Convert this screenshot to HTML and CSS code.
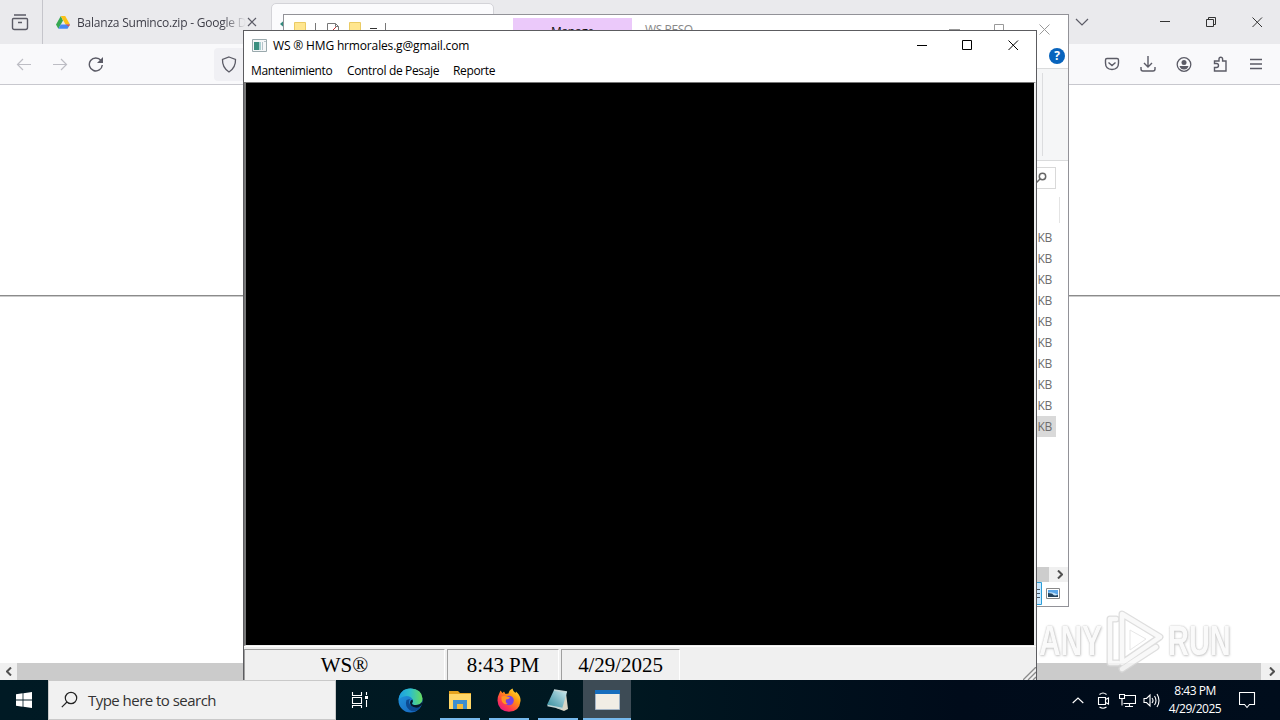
FILE: index.html
```html
<!DOCTYPE html>
<html lang="en">
<head>
<meta charset="utf-8">
<title>Desktop</title>
<link rel="stylesheet" href="styles.css">
</head>
<body>
<div class="desktop">
  <section class="browser">
    <div class="tabstrip">
      <div class="recent"><svg width="18" height="18" viewBox="0 0 18 18" class="line"><path stroke-width="1.400" d="M3 2h12M2.500 5.500h13q1 0 1 1v8q0 2-2 2h-11q-2 0-2-2v-8q0-1 1-1zM7 9.500h4"/></svg></div>
      <div class="tab">
        <svg width="14" height="13" viewBox="0 0 14 13"><path fill="#36a852" d="M4.8 0 0 8.4 2.4 12.7 7 4.4z"/><path fill="#fbc116" d="M4.8 0h4.4L14 8.4H9.5z"/><path fill="#4688f4" d="M4.7 8.4H14l-2.4 4.3H2.4z"/><path fill="#ea4f43" d="M9.5 8.4H14l-1.200 2.200z"/></svg>
        <span class="tab-title">Balanza Suminco.zip - Google D</span>
        <svg width="10" height="10" viewBox="0 0 10 10" class="line"><path d="m1 1 8 8m0-8-8 8"/></svg>
      </div>
      <div class="active-tab"><i></i></div>
      <div class="tab-menu"><svg width="14" height="8" viewBox="0 0 14 8" class="line"><path d="m1 1 6 6 6-6"/></svg></div>
      <div class="controls">
        <span><svg width="11" height="11" viewBox="0 0 11 11" class="line dark"><path d="M0 4.500h10"/></svg></span>
        <span><svg width="11" height="11" viewBox="0 0 11 11" class="line dark"><path d="M.5 2.500h7v7h-7zM2.500 2.500v-2h7v7h-2"/></svg></span>
        <span><svg width="11" height="11" viewBox="0 0 11 11" class="line dark"><path d="m.5.5 9.500 9.500m0-9.500L.5 10"/></svg></span>
      </div>
    </div>
    <div class="toolbar">
      <div class="nav">
        <span><svg width="16" height="16" viewBox="0 0 16 16" class="line faint"><path d="M15 8.5H2M7 3 1.5 8.5 7 14"/></svg></span>
        <span><svg width="16" height="16" viewBox="0 0 16 16" class="line faint"><path d="M1 8.500H14M9 3l5.500 5.500L9 14"/></svg></span>
        <span><svg width="16" height="16" viewBox="0 0 16 16" class="line"><path stroke-width="1.400" d="M14.300 9A6.500 6.500 0 1 1 13 4.500"/><path fill="#5b5b66" stroke="none" d="M15 1v6H9z"/></svg></span>
      </div>
      <div class="urlbar"><svg width="16" height="17" viewBox="0 0 16 17" class="line"><path stroke-width="1.300" d="M8 1 14.500 3.500q.4 8-6.500 12.500Q1.100 11.500 1.500 3.500z"/></svg></div>
      <div class="actions">
        <span><svg width="16" height="16" viewBox="0 0 16 16" class="line"><path stroke-width="1.400" d="M3 2.500h10q1.500 0 1.500 1.500v3q0 6.500-6.500 6.500T1.500 7V4Q1.500 2.500 3 2.500zM4.500 6.500 8 9.500l3.500-3"/></svg></span>
        <span><svg width="16" height="16" viewBox="0 0 16 16" class="line"><path stroke-width="1.400" d="M8 0v11M4 7l4 4 4-4M1 11v2q0 2 2 2h10q2 0 2-2v-2"/></svg></span>
        <span><svg width="16" height="16" viewBox="0 0 16 16" class="line"><circle cx="8" cy="8.500" r="6.800" stroke-width="1.300"/><circle cx="8" cy="6.500" r="2.500" fill="#5b5b66" stroke="none"/><path fill="#5b5b66" stroke="none" d="M3.500 10h9q-1 3.500-4.500 3.500T3.500 10z"/></svg></span>
        <span><svg width="16" height="16" viewBox="0 0 16 16" class="line"><path stroke-width="1.400" d="M2.500 15V11.500h2a2 2 0 0 0 0-4h-2V5h4.500V3a1.800 1.800 0 0 1 3.600 0V5h3.400v10z"/></svg></span>
        <span><svg width="14" height="14" viewBox="0 0 14 14" class="line"><path stroke-width="1.300" d="M1 2.500h12M1 7h12M1 11.500h12"/></svg></span>
      </div>
    </div>
    <div class="page"><hr class="rule"></div>
    <div class="hscroll">
      <span><svg width="6" height="9" viewBox="0 0 6 9"><path class="arrow" d="M5 .5 1 4.500l4 4"/></svg></span>
      <i></i>
      <span class="end"><svg width="6" height="9" viewBox="0 0 6 9"><path class="arrow" d="m1 .5 4 4-4 4"/></svg></span>
    </div>
  </section>

  <section class="explorer">
    <div class="ex-title">
      <svg class="ex-quick" width="110" height="16" viewBox="0 0 110 16"><path fill="#ffe68f" stroke="#eacb64" d="M10.500 7.500h11v9h-11zM65.500 7.500h11v9h-11z"/><path fill="none" stroke="#777" d="M31.500 8v8M43.500 16V8.500h8l3 3V16M51.500 8.500v3h3M101.500 8v8"/><path stroke="#c33" d="m49 15 3-3"/><path stroke="#333" d="M86 13.500h7"/></svg>
      <div class="ex-manage">Manage</div>
      <div class="ex-name">WS PESO</div>
      <div class="ex-controls">
        <svg width="11" height="11" viewBox="0 0 11 11"><path d="M0 5.500h11"/></svg>
        <svg width="11" height="11" viewBox="0 0 11 11"><path d="M.5.5h9v10h-9z"/></svg>
        <svg width="11" height="11" viewBox="0 0 11 11"><path d="m.5.500 10 10m0-10-10 10"/></svg>
      </div>
    </div>
    <div class="ex-help"><b>?</b></div>
    <div class="ex-ribbon"><i></i></div>
    <div class="ex-address"><div class="ex-search"><svg width="12" height="12" viewBox="0 0 12 12"><circle cx="7.500" cy="4.500" r="3.200"/><path d="M5 7 .5 11.500"/></svg></div></div>
    <div class="ex-head"></div>
    <ul class="ex-files"><li>KB</li><li>KB</li><li>KB</li><li>KB</li><li>KB</li><li>KB</li><li>KB</li><li>KB</li><li>KB</li><li class="selected">KB</li></ul>
    <div class="ex-scroll"><i></i><span><svg width="6" height="9" viewBox="0 0 6 9"><path class="arrow" d="m1 .5 4 4-4 4"/></svg></span></div>
    <div class="ex-status">
      <svg class="details" width="12" height="23" viewBox="0 0 12 23"><path fill="#cce8ff" stroke="#2a9fd8" d="M.5.5h11v22H.5z"/><path stroke="#456" d="M4 7.500h6M4 11.500h6M4 15.500h6"/></svg>
      <svg width="14" height="11" viewBox="0 0 14 11"><path fill="#fff" stroke="#888" d="M.5.500h13v10H.5z"/><path fill="#5aa5e8" d="M2 2h10v7H2z"/><path fill="#c5e3f8" d="M2 5q4-2 10 2v1H2z"/><path fill="#24435e" d="M2 5q4 0 5 1.500t5 .5v2H2z"/></svg>
    </div>
  </section>

  <section class="app">
    <div class="app-title">
      <svg width="15" height="13" viewBox="0 0 15 13"><path fill="#f5f7f8" stroke="#9aa9ad" d="M.5.500h14v12H.5z"/><path fill="#3b8f80" d="M2 3h5v8H2z"/><path fill="#a8cfd0" d="M7 3h2v8H7z"/><path stroke="#b6c4cb" d="M10.500 3v8M12 2.500h2"/></svg>
      <span class="app-name">WS ® HMG hrmorales.g@gmail.com</span>
      <div class="app-controls">
        <span><svg width="11" height="11" viewBox="0 0 11 11"><path d="M1 5.500h10"/></svg></span>
        <span><svg width="11" height="11" viewBox="0 0 11 11"><path d="M.5.5h9v9h-9z"/></svg></span>
        <span><svg width="11" height="11" viewBox="0 0 11 11"><path d="m.5.500 9.500 9.500m0-9.500L.5 10"/></svg></span>
      </div>
    </div>
    <nav class="menu"><span class="m1">Mantenimiento</span><span class="m2">Control de Pesaje</span><span class="m3">Reporte</span></nav>
    <div class="client"></div>
    <div class="status">
      <div class="pane p1">WS®</div><div class="pane p2">8:43 PM</div><div class="pane p3">4/29/2025</div>
      <svg class="grip" width="13" height="13" viewBox="0 0 13 13"><path stroke="#8a8a8a" stroke-width="1.300" d="M0 13 13 0M5 13l8-8M10 13l3-3"/></svg>
    </div>
  </section>

  <div class="watermark">
    <span class="any">ANY</span>
    <svg width="60" height="64" viewBox="0 0 60 64"><g fill="none" stroke-linejoin="round" stroke-linecap="round"><path stroke="#d9d9d9" stroke-width="7" d="M16 5 54 28 16 54zM10 10H4v44h8M16 60l34-22"/><path stroke="#f8f8f8" stroke-width="4.500" d="M16 5 54 28 16 54zM10 10H4v44h8M16 60l34-22"/></g><path fill="#fff" stroke="#e2e2e2" d="m24 21 16 9-16 11z"/></svg>
    <span class="run">RUN</span>
  </div>

  <footer class="taskbar">
    <div class="start"><svg width="16" height="16" viewBox="0 0 16 16"><path fill="#fff" d="m0 2.200 6.600-.9v6.300H0zM7.400 1.200 16 0v7.600H7.400zM0 8.400h6.600v6.300L0 13.800zM7.400 8.400H16V16l-8.600-1.200z"/></svg></div>
    <div class="search"><svg width="18" height="18" viewBox="0 0 18 18"><circle cx="10" cy="7" r="5.700"/><path d="M6 11 .8 16.200"/></svg><span>Type here to search</span></div>
    <div class="task view"><svg width="17" height="16" viewBox="0 0 17 16"><path fill="none" stroke="#fff" stroke-width="1.100" d="M1.500 0v3.500h9V0M1.500 5.500h9v6h-9zM1.500 16v-2.500h9V16M15.500 0v3M15.500 8v7"/><path fill="#fff" d="M14 4h3v3h-3z"/></svg></div>
    <div class="task wide"><svg width="25" height="25" viewBox="0 0 25 25"><defs><linearGradient id="eg" x1="0" x2="1"><stop stop-color="#1b9de2"/><stop offset=".5" stop-color="#2fc0c8"/><stop offset="1" stop-color="#68dc5c"/></linearGradient><linearGradient id="eb" x1="0" y1="0" x2=".8" y2="1"><stop stop-color="#219be0"/><stop offset="1" stop-color="#1766c0"/></linearGradient></defs><circle cx="12.500" cy="12.500" r="12" fill="url(#eb)"/><path fill="#0c4a92" d="M8.500 12q-2 6 3 10 5 3 10-1.500 1-1.500 0-1.500-4 1.500-8-1-4-3-1.500-7z"/><path fill="url(#eg)" d="M.5 12Q2 .5 12.500.500 24 1 24.500 10.500q0 6.500-6.500 6.500-4.500 0-4-1.800 1.500-1.500.5-3.700Q13 8 8.500 8 3 8.500.5 12z"/><path fill="#06182a" d="M14.500 11.500q1 2-.3 3.500-.7 2 3.800 2 4 0 6-3l.500 1.500Q22 20.500 17 19.500q-5-1-5-5 .3-2.500 2.500-3z"/></svg></div>
    <div class="task open"><svg width="22" height="20" viewBox="0 0 22 20"><path fill="#e5a31e" d="M0 1h9l2 2h11v5H0z"/><path fill="#ffd667" d="M0 4h22v15H0z"/><path fill="#3d8ed0" d="M4 10h14v9h-4v-5H8v5H4z"/><path fill="#f1b93c" d="M8 14h6v5H8z"/></svg></div>
    <div class="task open"><svg width="24" height="24" viewBox="0 0 24 24"><defs><linearGradient id="fx" x1="1" y1="0" x2=".2" y2="1"><stop stop-color="#fff044"/><stop offset=".4" stop-color="#ff980e"/><stop offset=".75" stop-color="#ff3b4d"/><stop offset="1" stop-color="#e31587"/></linearGradient></defs><path fill="url(#fx)" d="M2 6 3.500 2.500 5.500 5 7 3.500 8.500 6l3-.5Q12 2 15.500.500q.5 3 3 4.500l.5-1.500Q24 8 23.500 13 22.500 23.500 12 23.800 1 23 .5 12.500.5 8.500 2 6z"/><circle cx="12" cy="12.500" r="4.800" fill="#7542e5"/><path fill="#ff9421" d="M4.500 8.500q4-1.500 8.500 1-1 2-4 2-1 3 2 4.500-5.500 1-6.500-4z"/></svg></div>
    <div class="task open"><svg width="24" height="23" viewBox="0 0 24 23"><defs><linearGradient id="np" x1="0" y1="1" x2="1" y2="0"><stop stop-color="#2e8998"/><stop offset=".5" stop-color="#7bb8c5"/><stop offset="1" stop-color="#d3edf0"/></linearGradient></defs><path fill="#d9d6c6" d="m20 4 2 16-4 2-8-3z"/><path fill="url(#np)" d="M8 1 21 3 16 20 1 16z"/><path fill="none" stroke="#c4d7d8" stroke-width="1.500" d="M8 1 21 3M1.500 16.500l15 3"/></svg></div>
    <div class="task current"><svg width="25" height="20" viewBox="0 0 25 20"><path fill="#f1ede5" d="M.5.500h24v19H.5z"/><path fill="#176dbd" d="M0 0h25v4H0z"/><path fill="none" stroke="#a4b4c5" d="M.5 4v15.500h24V4"/></svg></div>
    <div class="tray">
      <svg class="up" width="12" height="7" viewBox="0 0 12 7"><path d="m.7 6 5.300-5 5.300 5"/></svg>
      <svg class="cam" width="13" height="17" viewBox="0 0 13 17"><path d="M1.500 5.500h7v7h-7zM8.500 7.500l3-1.500v6l-3-1.500M2.500 2.500q3.500-3 7 0M2.500 15q3.500 2.500 7 0"/></svg>
      <svg class="net" width="17" height="15" viewBox="0 0 17 15"><path d="M5.500 2.500h11v8h-12M10.500 10.500v3M6 13.500h8M.5 1.500h5v4h-5zM3 5.500v7"/></svg>
      <svg class="vol" width="18" height="15" viewBox="0 0 18 15"><path d="M1 5.500h2.500L7 2v11L3.500 9.500H1zM9 5q2 2.500 0 5M11.500 3q3 4.500 0 9M14 1q4 6.500 0 13"/></svg>
      <div class="clock"><span>8:43 PM</span><span>4/29/2025</span></div>
      <svg class="note" width="17" height="17" viewBox="0 0 17 17"><path d="M.5.500h15v12h-5L8 15.500 5.500 12.500h-5z"/></svg>
    </div>
  </footer>
</div>
</body>
</html>
```
FILE: styles.css
```css
* { box-sizing: border-box; }
body { margin: 0; font: 12px "Open Sans", "Noto Sans", sans-serif; color: #111; }
svg { display: block; flex: none; }
.desktop { position: relative; width: 1280px; height: 720px; overflow: hidden; background: #fff; }
.line { fill: none; stroke: #5b5b66; stroke-width: 1.2; }
.dark { stroke: #333; stroke-width: 1; }
.faint { stroke: #bdbdc4; }
.arrow { fill: none; stroke: #505050; stroke-width: 2; }

.browser { position: absolute; inset: 0 0 40px; display: flex; flex-direction: column; }
.tabstrip { height: 44px; display: flex; background: #eaeaed; }
.recent { width: 43px; display: flex; align-items: center; padding-left: 11px; border-right: 1px solid #c5c5cb; }
.tab { width: 228px; display: flex; align-items: center; padding-left: 13px; }
.tab-title { width: 169px; margin: 0 1px 0 7px; color: #3e3e48; letter-spacing: -.22px; white-space: nowrap; -webkit-mask-image: linear-gradient(90deg, #000 145px, transparent 169px); }
.active-tab { width: 223px; height: 41px; margin-top: 3px; border: 1px solid #d3d3d8; border-radius: 5px 5px 0 0; background: #fbfbfd; }
.active-tab i { display: block; width: 8px; height: 14px; margin: 13px 0 0 8px; background: #338a7d; clip-path: polygon(0 50%, 100% 0, 100% 100%); }
.tab-menu { margin-left: auto; width: 67px; display: flex; align-items: center; }
.controls { display: flex; }
.controls span { width: 46px; display: flex; align-items: center; justify-content: center; }
.toolbar { height: 41px; display: flex; background: #f9f9fb; border-bottom: 1px solid #c8c8ce; }
.nav { display: flex; padding-left: 6px; width: 214px; }
.nav span, .actions span { width: 36px; display: flex; align-items: center; justify-content: center; }
.urlbar { width: 600px; height: 33px; margin-top: 4px; padding: 8px 0 0 7px; background: #f0f0f4; border-radius: 4px; }
.actions { display: flex; margin-left: auto; padding-right: 6px; }
.page { flex: 1; padding-top: 210px; background: #fff; }
.rule { height: 2px; margin: 0; border: 0; border-top: 1px solid #8b8b8b; border-bottom: 1px solid #ccc; }
.hscroll { height: 17px; display: flex; background: #f0f0f0; }
.hscroll span { width: 17px; display: flex; align-items: center; justify-content: center; }
.hscroll .end { width: 19px; padding-left: 3px; }
.hscroll i { flex: 1; background: #cbcbcb; }

.explorer { position: absolute; left: 283px; top: 14px; width: 786px; height: 593px; display: flex; flex-direction: column; background: #fff; border: 1px solid #929298; }
.ex-title { height: 31px; display: flex; }
.ex-quick { margin-right: 119px; }
.ex-manage { width: 119px; height: 24px; margin-top: 3px; padding: 5px 0 0 38px; background: #ebc9fa; line-height: 17px; letter-spacing: -.3px; }
.ex-name { padding: 6px 0 0 13px; line-height: 17px; color: #888; letter-spacing: -.4px; }
.ex-controls { margin-left: auto; display: flex; gap: 34px; padding: 9px 18px 0 0; }
.ex-controls path { fill: none; stroke: #999; }
.ex-help { height: 22px; display: flex; justify-content: flex-end; padding: 2px 3px 0 0; }
.ex-help b { width: 16px; height: 16px; border-radius: 50%; background: #0864bd; color: #fff; text-align: center; line-height: 16px; }
.ex-ribbon { height: 93px; display: flex; justify-content: flex-end; padding: 4px 25px 4px 0; background: #f5f6f7; border: solid #dadbdc; border-width: 1px 0; }
.ex-ribbon i { width: 1px; background: #dcdddf; }
.ex-address { height: 33px; display: flex; justify-content: flex-end; padding: 6px 12px 0 0; }
.ex-search { width: 190px; height: 22px; display: flex; align-items: center; justify-content: flex-end; padding-right: 8px; border: 1px solid #d9d9d9; }
.ex-search svg { fill: none; stroke: #666; stroke-width: 1.5; }
.ex-head { height: 26px; margin: 3px 8px 4px 0; border-right: 1px solid #e4e4e4; }
.ex-files { list-style: none; margin: 0 12px 0 0; padding: 0; height: 340px; color: #6d6d6d; text-align: right; }
.ex-files li { height: 21px; padding-right: 4px; line-height: 22px; letter-spacing: -.3px; }
.ex-files .selected { background: #d9d9d9; }
.ex-scroll { height: 15px; display: flex; background: #f0f0f0; }
.ex-scroll i { flex: 1; background: #cdcdcd; }
.ex-scroll span { width: 19px; display: flex; align-items: center; padding-left: 8px; }
.ex-status { display: flex; justify-content: flex-end; align-items: center; gap: 4px; padding-right: 8px; height: 23px; }

.app { position: absolute; left: 243px; top: 30px; width: 794px; height: 650px; display: flex; flex-direction: column; background: #fff; border: 1px solid #5c5c60; border-bottom: 0; }
.app-title { height: 30px; display: flex; align-items: center; padding-left: 8px; padding-bottom: 1px; }
.app-name { margin: 1px 0 1px 6px; letter-spacing: -.16px; color: #000; white-space: nowrap; }
.app-controls { margin-left: auto; display: flex; }
.app-controls span { width: 46px; display: flex; justify-content: center; }
.app-controls path { fill: none; stroke: #000; }
.menu { height: 21px; display: flex; gap: 14px; padding-left: 7px; line-height: 20px; color: #000; white-space: nowrap; }
.m1 { width: 82px; } .m2 { width: 92px; } .m3 { width: 41px; }
.menu span { letter-spacing: -.35px; }
.client { flex: none; height: 564px; background: #000; border: solid #777; border-width: 1px 2px 1px 2px; border-right-color: #eee; border-bottom-color: #eee; }
.status { flex: none; height: 34px; overflow: hidden; display: flex; gap: 2px; padding: 2px 0 0; background: #f0f0f0; border-top: 1px solid #fff; color: #000; font: 21px/30px "Liberation Serif", serif; text-align: center; }
.pane { border: solid #a0a0a0; border-width: 1px 1px 0; border-right-color: #fff; white-space: nowrap; letter-spacing: -.05px; }
.p1 { width: 201px; } .p2 { width: 112px; } .p3 { width: 119px; }
.grip { margin: auto 0 0 auto; }

.watermark { position: absolute; left: 1039px; top: 609px; width: 195px; height: 64px; display: flex; align-items: center; opacity: .85; color: #fafafa; font: bold 42px "Liberation Sans", sans-serif; text-shadow: 0 0 2px #aaa, 1px 1px 3px #c4c4c4; }
.watermark span { flex: none; transform-origin: 0 50%; white-space: nowrap; }
.any { width: 67px; transform: scaleX(.71); }
.run { width: 63px; transform: scaleX(.69); }
.watermark svg { margin-right: 2px; }

.taskbar { position: absolute; left: 0; right: 0; bottom: 0; height: 40px; display: flex; background: linear-gradient(90deg, #001a24, #001821 48%, #000b1a 75%, #000d1c); }
.start { width: 48px; display: flex; align-items: center; justify-content: center; }
.search { width: 288px; display: flex; align-items: center; padding-left: 12px; background: #f1f1f1; border: 1px solid #c9c9c9; color: #333; font-size: 15px; white-space: nowrap; }
.search svg { fill: none; stroke: #222; stroke-width: 1.2; }
.search span { margin-left: 9px; letter-spacing: -.53px; }
.task { width: 49px; display: flex; align-items: center; justify-content: center; }
.view { width: 48px; padding-right: 1px; }
.wide { width: 54px; padding-right: 1px; }
.open { position: relative; width: 49px; }
.wide + .open { margin-left: -3px; }
.open::after { content: ""; position: absolute; left: 5px; right: 4px; bottom: 0; height: 2px; background: #76b9ed; }
.current { width: 48px; margin-left: 1px; background: #3d4b55; border-bottom: 2px solid #76b9ed; padding-top: 2px; }
.tray { margin-left: auto; display: flex; align-items: center; color: #fff; padding-right: 24px; }
.tray svg { fill: none; stroke: #fff; stroke-width: 1.1; }
.cam { margin-left: 13px; } .net { margin-left: 9px; } .vol { margin-left: 7px; } .note { margin-left: 17px; }
.clock { width: 54px; margin-left: 7px; display: flex; flex-direction: column; align-items: center; line-height: 18px; white-space: nowrap; letter-spacing: -.5px; }
```
